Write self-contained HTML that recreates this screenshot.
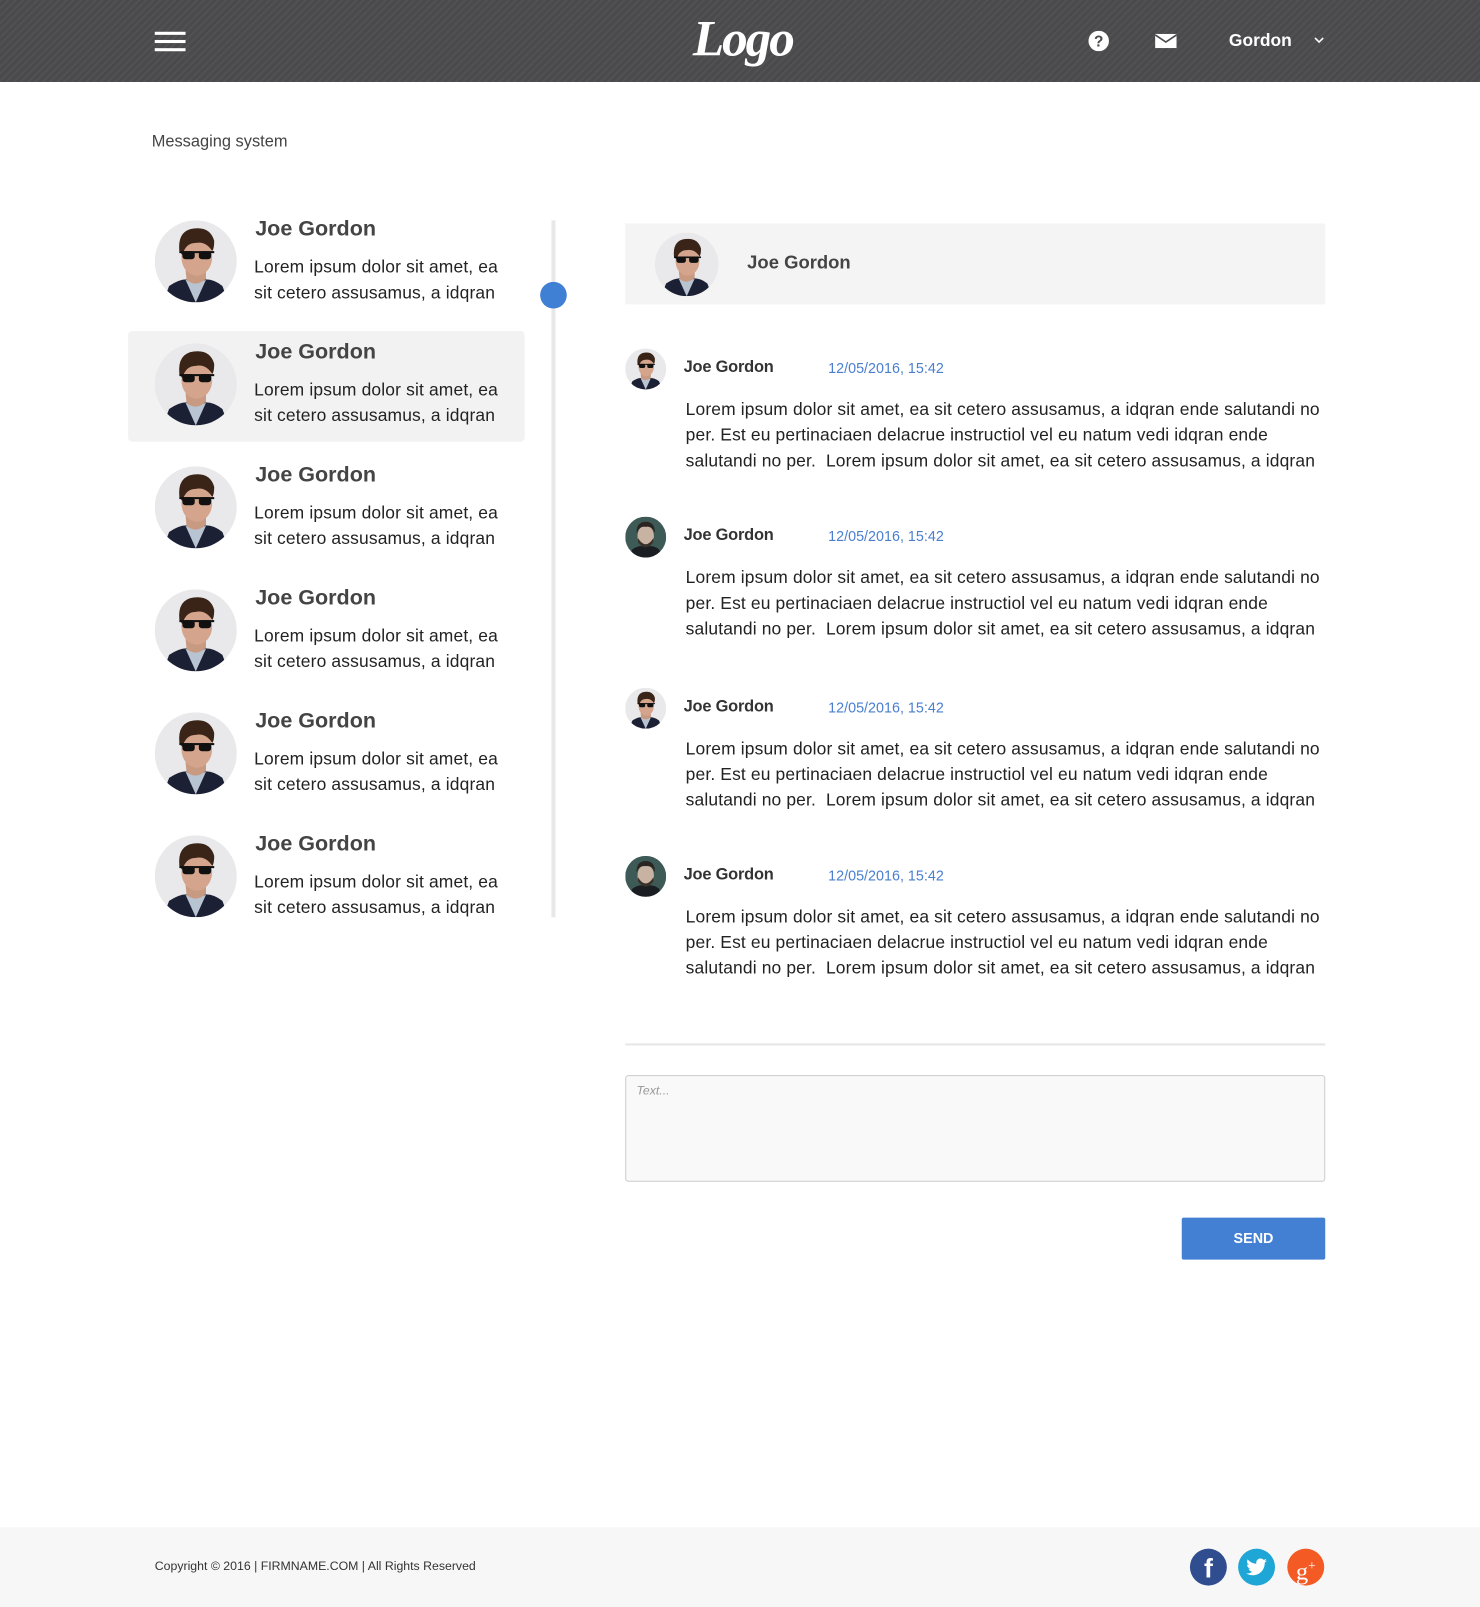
<!DOCTYPE html>
<html><head><meta charset="utf-8">
<style>
*{margin:0;padding:0;box-sizing:border-box}
html,body{width:1480px;height:1607px;overflow:hidden;background:#fff}
#w{position:absolute;left:0;top:0;width:1444px;height:1568px;transform:scale(1.02493);transform-origin:0 0;font-family:"Liberation Sans",sans-serif;color:#333}
.a{position:absolute}
header{position:absolute;left:0;top:0;width:1444px;height:80px;background:#4a4a4c;background-image:repeating-linear-gradient(135deg,rgba(255,255,255,.04) 0 2px,transparent 2px 5px)}
.ham{left:151px;width:30px;height:3px;background:#fff}
.nm{font-weight:bold;font-size:21px;color:#444}
.lt{font-size:17px;line-height:25px;color:#222;letter-spacing:.15px}
.mn{font-size:16px;font-weight:bold;color:#333;letter-spacing:-.2px}
.dt{font-size:14px;color:#4a7fcf}
.mt{font-size:17px;line-height:25px;color:#222;white-space:pre;letter-spacing:.14px}
</style></head><body><div id="w">
<svg width="0" height="0" style="position:absolute">
<defs>
<symbol id="av" viewBox="0 0 80 80">
<circle cx="40" cy="40" r="40" fill="#e9e8ea"/>
<clipPath id="c1"><circle cx="40" cy="40" r="40"/></clipPath>
<g clip-path="url(#c1)">
<path d="M8 80 L14 64 Q26 56 34 58 L46 58 Q56 56 66 64 L72 80Z" fill="#1c2034"/>
<path d="M30 58 L40 80 L50 58 Q40 62 30 58Z" fill="#b9c4d2"/>
<path d="M30 48 L31 58 Q40 66 50 57 L50 48Z" fill="#c99a82"/>
<ellipse cx="41" cy="36" rx="15" ry="18" fill="#d4a58c"/>
<path d="M24 30 Q22 10 38 8 Q54 6 58 20 Q58 28 56 30 Q50 20 40 22 Q30 22 27 34Z" fill="#3a2418"/>
<rect x="27" y="30" width="12" height="8" rx="3" fill="#111"/>
<rect x="43" y="30" width="12" height="8" rx="3" fill="#111"/>
<rect x="24" y="30" width="34" height="2" fill="#111"/>
</g>
</symbol>
<symbol id="av2" viewBox="0 0 80 80">
<circle cx="40" cy="40" r="40" fill="#3d5a56"/>
<clipPath id="c2"><circle cx="40" cy="40" r="40"/></clipPath>
<g clip-path="url(#c2)">
<path d="M8 80 L14 64 Q26 56 34 58 L46 58 Q56 56 66 64 L72 80Z" fill="#1a1d22"/>
<ellipse cx="40" cy="38" rx="16" ry="21" fill="#c8b2a2"/>
<path d="M25 42 Q40 66 55 42 L55 50 Q40 70 25 50Z" fill="#3a302a"/>
<path d="M22 32 Q22 10 40 10 Q58 10 58 32 Q52 18 40 20 Q28 18 22 32Z" fill="#2a2522"/>
</g>
</symbol>
</defs></svg>

<header>
<div class="a ham" style="top:31px"></div><div class="a ham" style="top:39px"></div><div class="a ham" style="top:47px"></div>
<div class="a" style="left:676px;top:8px;font-family:'Liberation Serif',serif;font-style:italic;font-weight:bold;font-size:50px;color:#fff;letter-spacing:-2px">Logo</div>
<svg class="a" style="left:1062px;top:30px" width="20" height="20" viewBox="0 0 20 20"><circle cx="10" cy="10" r="10" fill="#fff"/><text x="10" y="15.5" text-anchor="middle" font-family="Liberation Sans" font-weight="bold" font-size="15" fill="#4a4a4c">?</text></svg>
<svg class="a" style="left:1127px;top:33px" width="21" height="14" viewBox="0 0 21 14"><rect width="21" height="14" fill="#fff"/><path d="M0 1 L10.5 8 L21 1" stroke="#4a4a4c" stroke-width="1.6" fill="none"/></svg>
<div class="a" style="left:1199px;top:30px;font-size:17px;font-weight:bold;color:#fff">Gordon</div>
<svg class="a" style="left:1282px;top:36px" width="10" height="7" viewBox="0 0 10 7"><path d="M1 1 L5 5 L9 1" stroke="#fff" stroke-width="1.6" fill="none"/></svg>
</header>

<div class="a" style="left:148px;top:130px;font-size:16px;color:#444">Messaging system</div>

<div class="a" style="left:125px;top:323px;width:387px;height:108px;background:#f2f2f2;border-radius:4px"></div>
<div class="a" style="left:538px;top:215px;width:4px;height:680px;background:#e8e8e8"></div>
<div class="a" style="left:527px;top:275px;width:26px;height:26px;border-radius:50%;background:#3f7fd4"></div>

<svg class="a" style="left:151px;top:215px" width="80" height="80"><use href="#av"/></svg>
<div class="a nm" style="left:249px;top:212px">Joe Gordon</div>
<div class="a lt" style="left:248px;top:248px">Lorem ipsum dolor sit amet, ea<br>sit cetero assusamus, a idqran</div>
<svg class="a" style="left:151px;top:335px" width="80" height="80"><use href="#av"/></svg>
<div class="a nm" style="left:249px;top:332px">Joe Gordon</div>
<div class="a lt" style="left:248px;top:368px">Lorem ipsum dolor sit amet, ea<br>sit cetero assusamus, a idqran</div>
<svg class="a" style="left:151px;top:455px" width="80" height="80"><use href="#av"/></svg>
<div class="a nm" style="left:249px;top:452px">Joe Gordon</div>
<div class="a lt" style="left:248px;top:488px">Lorem ipsum dolor sit amet, ea<br>sit cetero assusamus, a idqran</div>
<svg class="a" style="left:151px;top:575px" width="80" height="80"><use href="#av"/></svg>
<div class="a nm" style="left:249px;top:572px">Joe Gordon</div>
<div class="a lt" style="left:248px;top:608px">Lorem ipsum dolor sit amet, ea<br>sit cetero assusamus, a idqran</div>
<svg class="a" style="left:151px;top:695px" width="80" height="80"><use href="#av"/></svg>
<div class="a nm" style="left:249px;top:692px">Joe Gordon</div>
<div class="a lt" style="left:248px;top:728px">Lorem ipsum dolor sit amet, ea<br>sit cetero assusamus, a idqran</div>
<svg class="a" style="left:151px;top:815px" width="80" height="80"><use href="#av"/></svg>
<div class="a nm" style="left:249px;top:812px">Joe Gordon</div>
<div class="a lt" style="left:248px;top:848px">Lorem ipsum dolor sit amet, ea<br>sit cetero assusamus, a idqran</div>

<div class="a" style="left:610px;top:218px;width:683px;height:79px;background:#f4f4f4"></div>
<svg class="a" style="left:639px;top:227px" width="62" height="62"><use href="#av"/></svg>
<div class="a" style="left:729px;top:246px;font-size:18px;font-weight:bold;color:#444">Joe Gordon</div>

<svg class="a" style="left:610px;top:340px" width="40" height="40"><use href="#av"/></svg>
<div class="a mn" style="left:667px;top:350px">Joe Gordon</div>
<div class="a dt" style="left:808px;top:351px">12/05/2016, 15:42</div>
<div class="a mt" style="left:669px;top:387px">Lorem ipsum dolor sit amet, ea sit cetero assusamus, a idqran ende salutandi no
per. Est eu pertinaciaen delacrue instructiol vel eu natum vedi idqran ende
salutandi no per.  Lorem ipsum dolor sit amet, ea sit cetero assusamus, a idqran</div>

<svg class="a" style="left:610px;top:504px" width="40" height="40"><use href="#av2"/></svg>
<div class="a mn" style="left:667px;top:514px">Joe Gordon</div>
<div class="a dt" style="left:808px;top:515px">12/05/2016, 15:42</div>
<div class="a mt" style="left:669px;top:551px">Lorem ipsum dolor sit amet, ea sit cetero assusamus, a idqran ende salutandi no
per. Est eu pertinaciaen delacrue instructiol vel eu natum vedi idqran ende
salutandi no per.  Lorem ipsum dolor sit amet, ea sit cetero assusamus, a idqran</div>

<svg class="a" style="left:610px;top:671px" width="40" height="40"><use href="#av"/></svg>
<div class="a mn" style="left:667px;top:681px">Joe Gordon</div>
<div class="a dt" style="left:808px;top:682px">12/05/2016, 15:42</div>
<div class="a mt" style="left:669px;top:718px">Lorem ipsum dolor sit amet, ea sit cetero assusamus, a idqran ende salutandi no
per. Est eu pertinaciaen delacrue instructiol vel eu natum vedi idqran ende
salutandi no per.  Lorem ipsum dolor sit amet, ea sit cetero assusamus, a idqran</div>

<svg class="a" style="left:610px;top:835px" width="40" height="40"><use href="#av2"/></svg>
<div class="a mn" style="left:667px;top:845px">Joe Gordon</div>
<div class="a dt" style="left:808px;top:846px">12/05/2016, 15:42</div>
<div class="a mt" style="left:669px;top:882px">Lorem ipsum dolor sit amet, ea sit cetero assusamus, a idqran ende salutandi no
per. Est eu pertinaciaen delacrue instructiol vel eu natum vedi idqran ende
salutandi no per.  Lorem ipsum dolor sit amet, ea sit cetero assusamus, a idqran</div>

<div class="a" style="left:610px;top:1018px;width:683px;height:2px;background:#e6e6e6"></div>
<div class="a" style="left:610px;top:1049px;width:683px;height:104px;background:#f9f9f9;border:1px solid #ccc;border-radius:3px"></div>
<div class="a" style="left:621px;top:1057px;font-size:12px;font-style:italic;color:#999">Text...</div>
<div class="a" style="left:1153px;top:1188px;width:140px;height:41px;background:#4380d3;border-radius:2px;color:#fff;font-weight:bold;font-size:14px;text-align:center;line-height:41px">SEND</div>

<div class="a" style="left:0;top:1490px;width:1444px;height:78px;background:#f7f7f7"></div>
<div class="a" style="left:151px;top:1521px;font-size:12px;color:#333">Copyright © 2016 | FIRMNAME.COM | All Rights Reserved</div>
<div class="a" style="left:1161px;top:1511px;width:36px;height:36px;border-radius:50%;background:#2f4d8f;color:#fff;font-weight:bold;font-size:26px;text-align:center;line-height:38px">f</div>
<div class="a" style="left:1208px;top:1511px;width:36px;height:36px;border-radius:50%;background:#1ea6d6"></div>
<svg class="a" style="left:1214px;top:1518px" width="24" height="22" viewBox="0 0 24 24"><path d="M23 5c-.8.4-1.7.6-2.6.7.9-.6 1.6-1.4 2-2.5-.9.5-1.9.9-2.9 1.1A4.5 4.5 0 0 0 11.8 8.5 12.8 12.8 0 0 1 2.5 3.8a4.5 4.5 0 0 0 1.4 6c-.7 0-1.4-.2-2-.6 0 2.2 1.6 4 3.6 4.4-.7.2-1.4.2-2 .1.6 1.8 2.2 3.1 4.2 3.1A9 9 0 0 1 1 18.7 12.8 12.8 0 0 0 7.9 20.7c8.3 0 12.8-6.9 12.8-12.8v-.6C21.6 6.7 22.4 5.9 23 5z" fill="#fff"/></svg>
<div class="a" style="left:1256px;top:1511px;width:36px;height:36px;border-radius:50%;background:#f35a24;color:#fff;font-family:'Liberation Serif',serif;font-size:24px;text-align:center;line-height:34px">g<sup style="font-size:13px">+</sup></div>
</div></body></html>
